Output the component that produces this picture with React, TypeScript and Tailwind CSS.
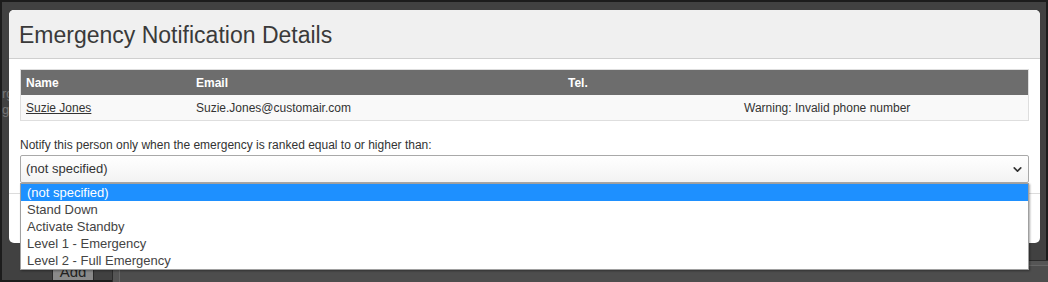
import { ChevronDown } from "lucide-react";

const options = [
  "(not specified)",
  "Stand Down",
  "Activate Standby",
  "Level 1 - Emergency",
  "Level 2 - Full Emergency",
];

export default function App() {
  return (
    <div
      className="relative w-[1048px] h-[282px] overflow-hidden bg-[#1c1c1c] p-[2px]"
      style={{ fontFamily: '"Liberation Sans", Arial, sans-serif' }}
    >
      {/* page behind the dialog */}
      <div className="relative w-full h-full bg-[#414141]">
        <div className="absolute left-0 top-[84px] text-[13px] leading-[16px] text-[#777]">rg<br />g</div>
        <div className="absolute left-[50px] top-[259px] w-[42px] h-[19px] bg-[#8a8a8a] border-x border-t border-[#2a2a2a] text-[15px] leading-[16px] text-[#222] flex items-end justify-center">Add</div>
        <div className="absolute left-[110px] top-[258px] w-[940px] h-[24px] bg-[#555] border-l border-t border-[#2b2b2b]">
          <div className="ml-[6px] mt-[4px] h-full bg-[#4d4d4d] border-l border-t border-[#666]" />
        </div>

        {/* dialog */}
        <div className="absolute left-[7px] top-[8px] w-[1031px] h-[233px] bg-white rounded-[5px] flex flex-col overflow-hidden text-[#333]">
          <div className="h-[49px] bg-[#f0f0f0] border-b border-[#cfcfcf] flex items-center px-[10px]">
            <h2 className="text-[23px] text-[#3a3a3a] pt-[3px]">Emergency Notification Details</h2>
          </div>

          <div className="px-[11px] pt-[10px]">
            <div className="border border-[#dedede]">
              <div className="h-[25px] bg-[#6d6d6d] grid grid-cols-[170px_372px_176px_1fr] items-center px-[5px] text-[12px] font-bold text-white">
                <span>Name</span>
                <span>Email</span>
                <span>Tel.</span>
                <span />
              </div>
              <div className="h-[25px] bg-[#f9f9f9] grid grid-cols-[170px_372px_176px_1fr] items-center px-[5px] text-[12px] text-[#333]">
                <span className="underline">Suzie Jones</span>
                <span>Suzie.Jones@customair.com</span>
                <span />
                <span>Warning: Invalid phone number</span>
              </div>
            </div>

            <p className="mt-[17px] text-[12px] leading-[14px]">
              Notify this person only when the emergency is ranked equal to or higher than:
            </p>

            <div className="mt-[3px] h-[28px] border border-[#a9a9a9] rounded-[2px] bg-gradient-to-b from-white to-[#f3f3f3] flex items-center justify-between pl-[5px] pr-[4px] text-[13px]">
              <span>(not specified)</span>
              <ChevronDown size={13} strokeWidth={3} className="text-[#333]" />
            </div>
          </div>

          <div className="mt-[10px] border-t border-[#dcdcdc] flex-1" />
        </div>

        {/* open select list */}
        <div className="absolute left-[18px] top-[181px] w-[1009px] bg-white border border-[#a0a0a0] shadow-[1px_1px_2px_rgba(0,0,0,0.35)] text-[13px] text-[#444]">
          {options.map((o, i) => (
            <div
              key={o}
              className={
                i === 0
                  ? "h-[17px] leading-[17px] pl-[6px] bg-[#1e90ff] text-white"
                  : "h-[17px] leading-[17px] pl-[6px]"
              }
            >
              {o}
            </div>
          ))}
        </div>
      </div>
    </div>
  );
}
